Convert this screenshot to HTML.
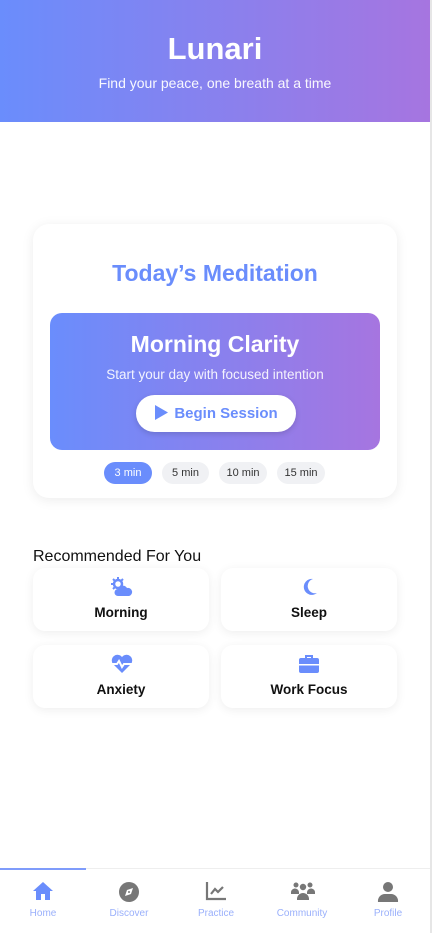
<!DOCTYPE html><html><head><style>
*{margin:0;padding:0;box-sizing:border-box}
body{width:432px;height:933px;background:#fff;font-family:"Liberation Sans",sans-serif;position:relative;overflow:hidden;border-right:2px solid #e6e6e6}
.hdr{position:absolute;left:0;top:0;width:430px;height:122px;background:linear-gradient(90deg,#6a8dfc,#a675e0);color:#fff;text-align:center}
.hdr h1{position:absolute;left:0;top:31px;width:100%;font-size:31px;font-weight:bold}
.hdr p{position:absolute;left:0;top:75px;width:100%;font-size:14px;opacity:.95}
.card{position:absolute;left:33px;top:224px;width:364px;height:274px;border-radius:16px;background:#fff;box-shadow:0 2px 12px rgba(0,0,0,.08)}
.card h2{position:absolute;left:0;top:36px;width:100%;text-align:center;color:#6a8dfc;font-size:23px;font-weight:bold}
.inner{position:absolute;left:17px;top:89px;width:330px;height:137px;border-radius:12px;background:linear-gradient(90deg,#6a8dfc,#a675e0);color:#fff;text-align:center}
.inner h3{position:absolute;left:0;top:18px;width:100%;font-size:23px;font-weight:bold}
.inner p{position:absolute;left:0;top:54px;width:100%;font-size:13.5px;opacity:.9}
.btn{position:absolute;left:86px;top:82px;width:160px;height:37px;border-radius:19px;background:#fff;color:#6a8dfc;font-weight:bold;font-size:15px;line-height:37px;box-shadow:0 2px 6px rgba(0,0,0,.15)}
.pill{position:absolute;top:238px;height:22px;border-radius:11px;background:#f0f1f4;font-size:11px;line-height:22px;text-align:center;color:#333}
.rt{position:absolute;left:33px;top:548px;font-size:16px;color:#111}
.rc{position:absolute;width:176px;height:63px;border-radius:12px;background:#fff;box-shadow:0 2px 10px rgba(0,0,0,.07);text-align:center}
.rc svg{position:absolute;top:9px;left:78px}
.rc b{position:absolute;left:0;top:37px;width:100%;font-size:13.5px;color:#111}
.nav{position:absolute;left:0;top:868px;width:430px;height:65px;border-top:1px solid #eee}
.ind{position:absolute;left:0;top:-1px;width:86px;height:2px;background:#7f9cfb}
.ni{position:absolute;top:0;width:86px;text-align:center}
.ni svg{position:absolute;top:12px;left:32px}
.ni span{position:absolute;left:0;top:39px;width:100%;font-size:10px;color:#9ab0fb}
</style></head><body>
<div class="hdr"><h1>Lunari</h1><p>Find your peace, one breath at a time</p></div>
<div class="card"><h2>Today’s Meditation</h2>
<div class="inner"><h3>Morning Clarity</h3><p>Start your day with focused intention</p>
<div class="btn"><svg width="14" height="15" viewBox="0 0 14 15" style="vertical-align:-2px;margin-right:6px"><path d="M1 0L14 7.5L1 15Z" fill="#6a8dfc"/></svg>Begin Session</div></div>
<div class="pill" style="left:71px;width:48px;background:#6a8dfc;color:#fff">3 min</div>
<div class="pill" style="left:129px;width:47px">5 min</div>
<div class="pill" style="left:186px;width:48px">10 min</div>
<div class="pill" style="left:244px;width:48px">15 min</div>
</div>
<div class="rt">Recommended For You</div>
<div class="rc" style="left:33px;top:568px"><svg width="22" height="20" viewBox="0 0 22 20"><circle cx="7" cy="7" r="4" fill="none" stroke="#6a8dfc" stroke-width="2.5"/><path d="M7 0v2M0 7h2M2 2l1.5 1.5M12 2l-1.5 1.5M2 12l1.5-1.5" stroke="#6a8dfc" stroke-width="2"/><path d="M7 19a3.5 3.5 0 0 1 0-7a5 5 0 0 1 9-1a4 4 0 0 1 2 8z" fill="#6a8dfc"/></svg><b>Morning</b></div>
<div class="rc" style="left:221px;top:568px"><svg width="20" height="20" viewBox="0 0 20 20"><path d="M14 2a8 8 0 1 0 4 14a7 7 0 0 1-4-14z" fill="#6a8dfc"/></svg><b>Sleep</b></div>
<div class="rc" style="left:33px;top:645px"><svg width="22" height="20" viewBox="0 0 22 20"><path d="M11 19L2 10a5 5 0 0 1 9-7a5 5 0 0 1 9 7z" fill="#6a8dfc"/><path d="M0 10h6l2-3 3 6 2-3h9" stroke="#fff" stroke-width="2" fill="none"/></svg><b>Anxiety</b></div>
<div class="rc" style="left:221px;top:645px"><svg width="20" height="20" viewBox="0 0 20 20"><path d="M7 4V2h6v2" stroke="#6a8dfc" stroke-width="2" fill="none"/><rect x="0" y="4" width="20" height="15" rx="2" fill="#6a8dfc"/><rect x="0" y="10" width="20" height="1.5" fill="#fff"/></svg><b>Work Focus</b></div>
<div class="nav"><div class="ind"></div>
<div class="ni" style="left:0"><svg width="22" height="20" viewBox="0 0 22 20"><path d="M11 1L1 10h3v9h5v-6h4v6h5v-9h3z" fill="#6a8dfc"/></svg><span>Home</span></div>
<div class="ni" style="left:86px"><svg width="22" height="22" viewBox="0 0 22 22"><circle cx="11" cy="11" r="10" fill="#777"/><path d="M15 7l-2 6-6 2 2-6z" fill="#fff"/><circle cx="11" cy="11" r="1" fill="#777"/></svg><span>Discover</span></div>
<div class="ni" style="left:173px"><svg width="22" height="20" viewBox="0 0 22 20"><path d="M2 1v17h19" stroke="#777" stroke-width="2.2" fill="none"/><path d="M6 13l4-5 3 3 5-5" stroke="#777" stroke-width="2.2" fill="none"/></svg><span>Practice</span></div>
<div class="ni" style="left:259px"><svg width="24" height="20" viewBox="0 0 24 20"><circle cx="5" cy="4" r="2.5" fill="#777"/><circle cx="19" cy="4" r="2.5" fill="#777"/><circle cx="12" cy="6" r="3.2" fill="#777"/><path d="M0 12a4 4 0 0 1 8-1v2H0zM16 11a4 4 0 0 1 8 1v1h-8zM6 18a6 6 0 0 1 12 0v1H6z" fill="#777"/></svg><span>Community</span></div>
<div class="ni" style="left:345px"><svg width="22" height="22" viewBox="0 0 22 22"><circle cx="11" cy="6" r="5" fill="#777"/><path d="M1 21a7 7 0 0 1 7-8h6a7 7 0 0 1 7 8z" fill="#777"/></svg><span>Profile</span></div>
</div>
</body></html>
